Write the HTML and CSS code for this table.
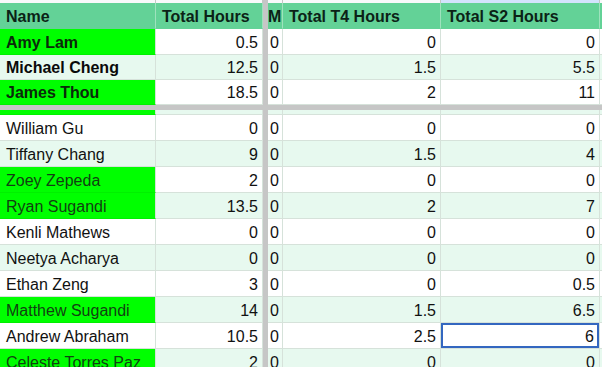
FILE: index.html
```html
<!DOCTYPE html>
<html>
<head>
<meta charset="utf-8">
<link rel="stylesheet" href="styles.css">
</head>
<body>
<div class="sheet">
  <div class="row letters">
    <div class="c"></div><div class="c"></div><div class="vbar"></div><div class="c"></div><div class="c"></div><div class="c sel-col"></div><div class="c"></div>
  </div>
  <div class="row head">
    <div class="c">Name</div><div class="c">Total Hours</div><div class="vbar"></div><div class="c m">M</div><div class="c">Total T4 Hours</div><div class="c">Total S2 Hours</div><div class="c"></div>
  </div>
  <div class="row h26 white">
    <div class="c hl b">Amy Lam</div><div class="c n">0.5</div><div class="vbar"></div><div class="c n z">0</div><div class="c n">0</div><div class="c n">0</div><div class="c"></div>
  </div>
  <div class="row h25 tint">
    <div class="c b">Michael Cheng</div><div class="c n">12.5</div><div class="vbar"></div><div class="c n z">0</div><div class="c n">1.5</div><div class="c n">5.5</div><div class="c"></div>
  </div>
  <div class="row h25 white">
    <div class="c hl b">James Thou</div><div class="c n">18.5</div><div class="vbar"></div><div class="c n z">0</div><div class="c n">2</div><div class="c n">11</div><div class="c"></div>
  </div>
  <div class="hbar"></div>
  <div class="row partial tint">
    <div class="c hl"></div><div class="c"></div><div class="vbar"></div><div class="c"></div><div class="c"></div><div class="c"></div><div class="c"></div>
  </div>
  <div class="row white">
    <div class="c">William Gu</div><div class="c n">0</div><div class="vbar"></div><div class="c n z">0</div><div class="c n">0</div><div class="c n">0</div><div class="c"></div>
  </div>
  <div class="row tint">
    <div class="c">Tiffany Chang</div><div class="c n">9</div><div class="vbar"></div><div class="c n z">0</div><div class="c n">1.5</div><div class="c n">4</div><div class="c"></div>
  </div>
  <div class="row white">
    <div class="c hl">Zoey Zepeda</div><div class="c n">2</div><div class="vbar"></div><div class="c n z">0</div><div class="c n">0</div><div class="c n">0</div><div class="c"></div>
  </div>
  <div class="row tint">
    <div class="c hl">Ryan Sugandi</div><div class="c n">13.5</div><div class="vbar"></div><div class="c n z">0</div><div class="c n">2</div><div class="c n">7</div><div class="c"></div>
  </div>
  <div class="row white">
    <div class="c">Kenli Mathews</div><div class="c n">0</div><div class="vbar"></div><div class="c n z">0</div><div class="c n">0</div><div class="c n">0</div><div class="c"></div>
  </div>
  <div class="row tint">
    <div class="c">Neetya Acharya</div><div class="c n">0</div><div class="vbar"></div><div class="c n z">0</div><div class="c n">0</div><div class="c n">0</div><div class="c"></div>
  </div>
  <div class="row white">
    <div class="c">Ethan Zeng</div><div class="c n">3</div><div class="vbar"></div><div class="c n z">0</div><div class="c n">0</div><div class="c n">0.5</div><div class="c"></div>
  </div>
  <div class="row tint">
    <div class="c hl">Matthew Sugandi</div><div class="c n">14</div><div class="vbar"></div><div class="c n z">0</div><div class="c n">1.5</div><div class="c n">6.5</div><div class="c"></div>
  </div>
  <div class="row white">
    <div class="c">Andrew Abraham</div><div class="c n">10.5</div><div class="vbar"></div><div class="c n z">0</div><div class="c n">2.5</div><div class="c n selected">6</div><div class="c"></div>
  </div>
  <div class="row tint">
    <div class="c hl">Celeste Torres Paz</div><div class="c n">2</div><div class="vbar"></div><div class="c n z">0</div><div class="c n">0</div><div class="c n">0</div><div class="c"></div>
  </div>
</div>
</body>
</html>
```

FILE: styles.css
```css
html, body {
  margin: 0;
  padding: 0;
  background: #ffffff;
  overflow: hidden;
}

.sheet {
  width: 640px;
  font-family: "Liberation Sans", Arial, sans-serif;
  font-size: 16px;
  color: #111;
}

.row {
  display: grid;
  grid-template-columns: 156px 107px 5px 15px 158px 159px 40px;
  height: 26px;
}

.row.h26 { height: 26px; }
.row.h25 { height: 25px; }
.row.partial { height: 5px; }

.c {
  box-sizing: border-box;
  border-right: 1px solid #d6e2da;
  border-bottom: 1px solid #d6e2da;
  padding: 0 4px 2px 6px;
  display: flex;
  align-items: flex-end;
  white-space: nowrap;
  overflow: hidden;
}

.n { justify-content: flex-end; }
.z { padding-right: 3px; padding-left: 0; }

.vbar { background: #c6c6c6; }

.hbar {
  height: 5px;
  width: 640px;
  background: #c6c6c6;
}

.letters { height: 3px; }
.letters .c {
  background: #f8f9fa;
  border-right-color: #c4c7c5;
  border-bottom: 0;
  padding: 0;
}
.letters .sel-col { background: #d3e3fd; }

.head .c {
  background: #63d297;
  font-weight: bold;
  color: #0b2216;
  border-right-color: #9ee2bd;
  border-bottom-color: #63d297;
}
.head .m { padding-left: 0; }

.white .c { background: #ffffff; }
.tint .c { background: #e7f9ef; }

.c.b { font-weight: bold; color: #0a0a0a; }

.row .c.hl {
  background: #00ff00;
  color: #123f12;
  border-bottom-color: #00f000;
}
.row .c.hl.b { color: #0b2a0b; }

.partial .c { padding: 0; }

.c.selected {
  background: #ffffff;
  box-shadow: inset 0 0 0 2px #3367c0;
  padding-right: 5px;
}
```
